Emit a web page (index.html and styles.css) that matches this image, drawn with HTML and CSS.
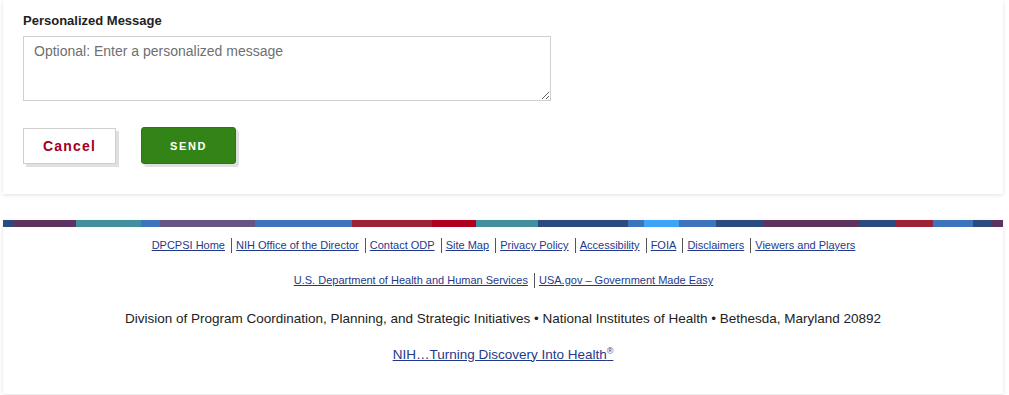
FILE: index.html
```html
<html>
  <head>
    <link rel="stylesheet" href="styles.css">
  </head>
  <body>
    <div class="page">
      <div class="card">
        <label class="field-label" for="message">Personalized Message</label>
        <textarea id="message" class="message" placeholder="Optional: Enter a personalized message"></textarea>
        <div class="actions">
          <button class="btn-cancel" type="button">Cancel</button>
          <button class="btn-send" type="button">SEND</button>
        </div>
      </div>

      <div class="footer">
        <div class="stripe">
          <span class="navy"></span>
          <span class="plum"></span>
          <span class="teal"></span>
          <span class="blue"></span>
          <span class="violet"></span>
          <span class="blue"></span>
          <span class="red"></span>
          <span class="crimson"></span>
          <span class="teal"></span>
          <span class="navy"></span>
          <span class="blue"></span>
          <span class="sky"></span>
          <span class="blue"></span>
          <span class="navy"></span>
          <span class="plum"></span>
          <span class="navy"></span>
          <span class="red"></span>
          <span class="blue"></span>
          <span class="navy"></span>
          <span class="plum"></span>
        </div>

        <ul class="links">
          <li><a href="#">DPCPSI Home</a></li>
          <li><a href="#">NIH Office of the Director</a></li>
          <li><a href="#">Contact ODP</a></li>
          <li><a href="#">Site Map</a></li>
          <li><a href="#">Privacy Policy</a></li>
          <li><a href="#">Accessibility</a></li>
          <li><a href="#">FOIA</a></li>
          <li><a href="#">Disclaimers</a></li>
          <li><a href="#">Viewers and Players</a></li>
        </ul>
        <ul class="links">
          <li><a href="#">U.S. Department of Health and Human Services</a></li>
          <li><a href="#">USA.gov &ndash; Government Made Easy</a></li>
        </ul>

        <p class="address">Division of Program Coordination, Planning, and Strategic Initiatives &bull; National Institutes of Health &bull; Bethesda, Maryland 20892</p>
        <p class="tagline"><a href="#">NIH&hellip;Turning Discovery Into Health<sup>&reg;</sup></a></p>
      </div>
    </div>
  </body>
</html>
```

FILE: styles.css
```css
body {
  margin: 0;
  background-color: #fff;
  font-family: "Liberation Sans", Arial, Helvetica, sans-serif;
}

.page {
  width: 1000px;
  margin-left: 3px;
}

/* Message card */
.card {
  background-color: #fff;
  padding: 13px 20px 30px 20px;
  box-shadow: 0 1px 4px rgba(0,0,0,0.12);
}

.field-label {
  display: block;
  font-size: 13px;
  font-weight: bold;
  color: #222;
  margin-bottom: 8px;
}

.message {
  display: block;
  width: 528px;
  height: 65px;
  margin: 0;
  padding: 6px 10px 5px 10px;
  box-sizing: border-box;
  border: 1px solid #d0d0d0;
  font-family: "Liberation Sans", Arial, Helvetica, sans-serif;
  font-size: 14px;
  color: #333;
  resize: vertical;
}

.message::placeholder {
  color: #6f6f6f;
}

.actions {
  display: flex;
  gap: 25px;
  margin-top: 26px;
}

.btn-cancel {
  width: 93px;
  height: 36px;
  background-color: #fff;
  border: 1px solid #cfcfcf;
  box-shadow: 3px 3px 0 #e0e0e0;
  color: #a0001e;
  font-family: "Liberation Sans", Arial, Helvetica, sans-serif;
  font-size: 14px;
  font-weight: bold;
  letter-spacing: 1.2px;
  cursor: pointer;
  margin-top: 1px;
}

.btn-send {
  width: 95px;
  height: 37px;
  background-color: #338416;
  border: 1px solid #2d7613;
  border-radius: 3px;
  box-shadow: 3px 3px 0 #e0e0e0;
  color: #fff;
  font-family: "Liberation Sans", Arial, Helvetica, sans-serif;
  font-size: 11px;
  font-weight: bold;
  letter-spacing: 1.6px;
  cursor: pointer;
}

.btn-send:hover, .btn-cancel:hover {
  opacity: 0.8;
}

/* Footer */
.footer {
  margin-top: 26px;
  background-color: #fff;
  box-shadow: 0 1px 4px rgba(0,0,0,0.12);
  padding-bottom: 32px;
  text-align: center;
}

.stripe {
  display: grid;
  grid-template-columns: 11fr 62fr 65fr 19fr 95fr 97fr 80fr 44fr 62fr 90fr 16fr 35fr 37fr 48fr 95fr 36fr 38fr 40fr 18fr 12fr;
  height: 7px;
}

.navy { background-color: #2b4a7e; }
.plum { background-color: #5b3560; }
.teal { background-color: #438f9e; }
.blue { background-color: #3e74bc; }
.violet { background-color: #655586; }
.red { background-color: #9b2335; }
.crimson { background-color: #af001e; }
.sky { background-color: #40a4f6; }

.links {
  list-style: none;
  margin: 11px 0 0 0;
  padding: 0;
  font-size: 11px;
  line-height: 15px;
}

.links + .links {
  margin-top: 20px;
}

.links li {
  display: inline-block;
  padding: 0 3px 0 4px;
}

.links li + li {
  border-left: 1px solid #555;
}

.footer a {
  color: #1f3a8a;
}

.address {
  margin: 23px 0 0 0;
  font-size: 13.5px;
  color: #222;
}

.tagline {
  margin: 19px 0 0 0;
  font-size: 13.5px;
}

.tagline sup {
  font-size: 9px;
}
```
